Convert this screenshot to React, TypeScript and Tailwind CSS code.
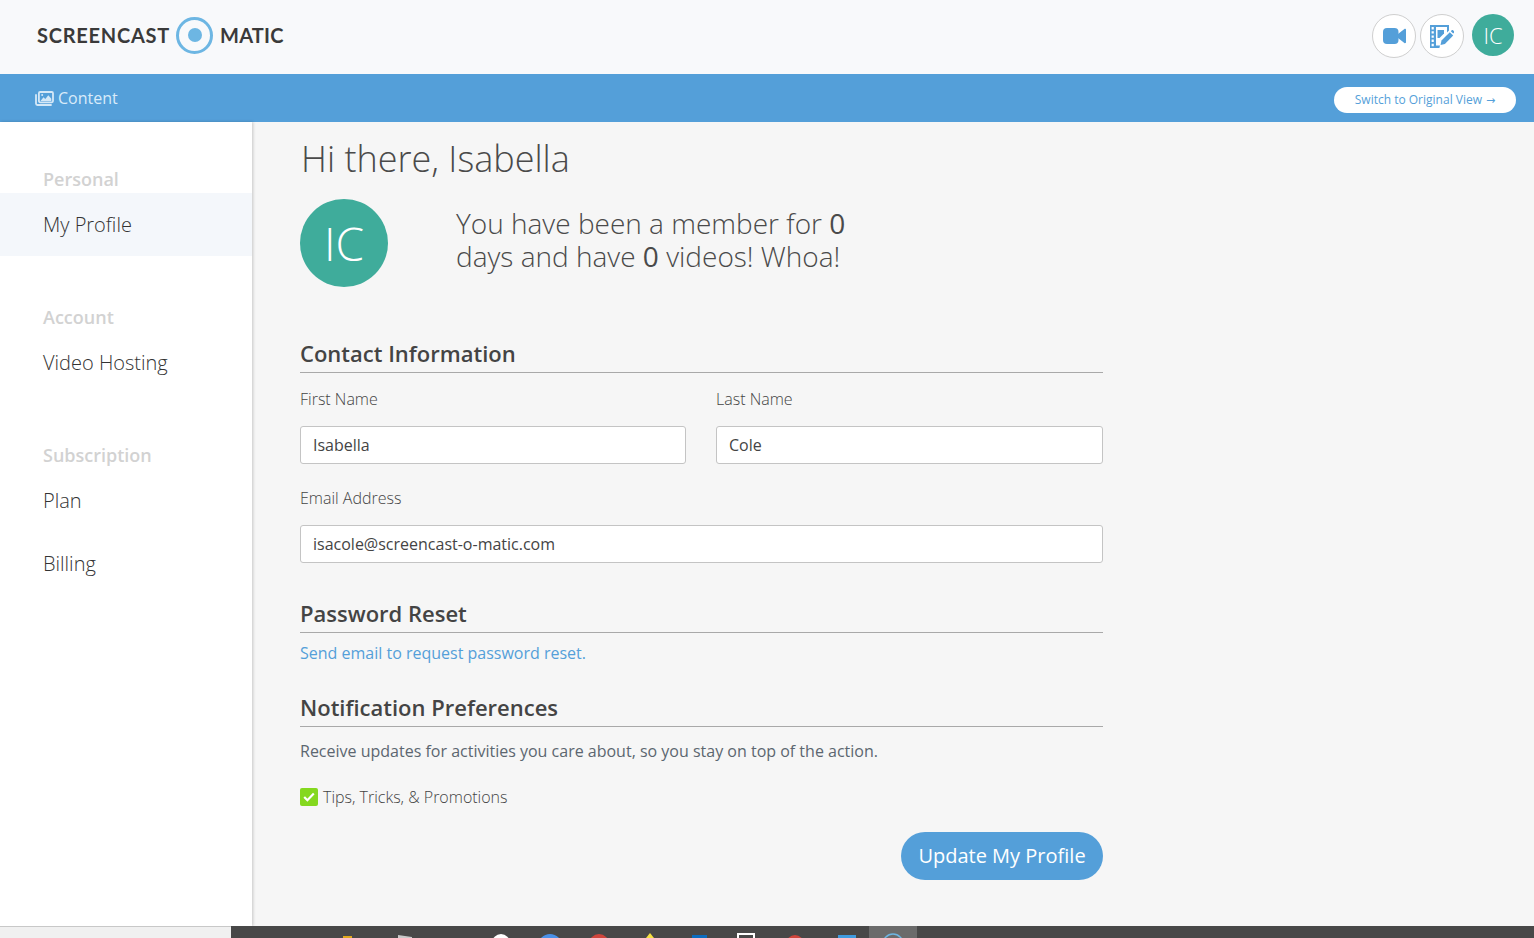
import React from 'react';

function ImagesIcon() {
  return (
    <svg width="19" height="15" viewBox="0 0 19 15" fill="none" className="text-[#d5e8f7]">
      <path d="M1 4v8.6c0 .8.6 1.4 1.4 1.4H16" stroke="currentColor" strokeWidth="1.8" strokeLinecap="round" />
      <rect x="3.9" y="1" width="14.1" height="10.3" rx="1.2" stroke="currentColor" strokeWidth="1.8" />
      <path d="M5.5 10l3-3.7 1.8 1.7 3-3.8 3 3.6v2.2z" fill="currentColor" />
      <circle cx="7.2" cy="4" r="1" fill="currentColor" />
    </svg>
  );
}

function VideoIcon() {
  return (
    <svg width="23" height="16" viewBox="0 0 23 16" fill="#549fd9">
      <rect x="0" y="0" width="15.5" height="16" rx="4" />
      <path d="M15 6l6.4-5c.6-.4 1.6-.1 1.6.7v12.6c0 .8-1 1.1-1.6.7L15 10z" />
    </svg>
  );
}

function FilmEditIcon() {
  return (
    <svg width="24" height="23" viewBox="0 0 24 23" fill="#549fd9">
      <path d="M0 0h19v5.5l-2 2V2H6v18.5h4l-.6 2.5H0zM1.6 2v2.4h2.2V2zm0 4.2v2.4h2.2V6.2zm0 4.2v2.4h2.2v-2.4zm0 4.2V17h2.2v-2.4zm0 4.2v2.4h2.2v-2.4z" fillRule="evenodd" />
      <path d="M7.5 5h6.5v3.5L9.5 13H7.5z" />
      <path d="M11.5 15.5L19.8 7.2l3.4 3.4-8.3 8.3-4.4 1z" />
      <path d="M20.8 6.2l.9-.9c.4-.4 1-.4 1.4 0l1 1c.4.4.4 1 0 1.4l-.9.9z" />
    </svg>
  );
}

function Section({ title }: { title: string }) {
  return (
    <h2 className="text-[22px] leading-[30px] font-semibold text-[#444] border-b border-[#a9a9a9] pb-1">{title}</h2>
  );
}

function Field({ label, value }: { label: string; value: string }) {
  return (
    <div>
      <label className="block text-[16px] leading-[22px] font-light text-[#444]">{label}</label>
      <input
        readOnly
        value={value}
        className="mt-4 block w-full h-[38px] px-3 bg-white border border-[#c4c4c4] rounded-[3px] text-[16px] text-[#444] outline-none"
      />
    </div>
  );
}

function NavGroup({ title, items }: { title: string; items: { label: string; active?: boolean }[] }) {
  return (
    <div className="mb-[49px]">
      <div className="pl-[43px] h-[26px] pb-[1px] flex items-center text-[18px] font-semibold text-[#d2d2d2]">{title}</div>
      {items.map(item => (
        <div
          key={item.label}
          className={`pl-[43px] h-[63px] flex items-center text-[20px] font-light text-[#333] ${item.active ? 'bg-[#f4f7fb]' : ''}`}
        >
          {item.label}
        </div>
      ))}
    </div>
  );
}

export default function App() {
  return (
    <div className="h-[938px] w-[1534px] overflow-hidden flex flex-col bg-[#f6f6f6] font-['Open_Sans',sans-serif]">
      <header className="h-[74px] shrink-0 bg-[#f8f9fb] flex items-center justify-between pl-[37px] pr-5 pb-[2px]">
        <div className="-mt-[2px] flex items-center text-[#3a3a3a] font-['Lato',sans-serif] font-bold text-[20px] tracking-[0.75px]">
          <span>SCREENCAST</span>
          <span className="ml-[6px] mr-[7px] w-[37px] h-[37px] rounded-full border-[3px] border-[#6db6e3] flex items-center justify-center">
            <span className="w-[14px] h-[14px] rounded-full bg-[#6db6e3]" />
          </span>
          <span className="tracking-[0.2px]">MATIC</span>
        </div>
        <div className="flex items-center gap-1">
          <button className="w-11 h-11 rounded-full border border-[#cfcfcf] bg-white flex items-center justify-center">
            <VideoIcon />
          </button>
          <button className="w-11 h-11 rounded-full border border-[#cfcfcf] bg-white flex items-center justify-center">
            <FilmEditIcon />
          </button>
          <div className="ml-1 -mt-[2px] w-[42px] h-[42px] rounded-full bg-[#3fac9b] text-white text-[22px] font-light flex items-center justify-center">IC</div>
        </div>
      </header>

      <div className="h-12 shrink-0 bg-[#549fd9] flex items-center justify-between pl-[35px] pr-[18px]">
        <div className="flex items-center gap-1 text-[16px] text-[#d9ebf9]">
          <ImagesIcon />
          <span>Content</span>
        </div>
        <button className="mt-1 h-[26px] w-[182px] rounded-full bg-white text-[12px] text-[#549fd9] flex items-center justify-center gap-1">
          <span>Switch to Original View</span>
          <span className="font-['DejaVu_Sans',sans-serif] text-[11px] leading-none">→</span>
        </button>
      </div>

      <div className="flex-1 min-h-0 flex">
        <aside className="w-[252px] shrink-0 bg-white shadow-[1px_0_3px_rgba(0,0,0,0.2)] pt-[45px]">
          <NavGroup title="Personal" items={[{ label: 'My Profile', active: true }]} />
          <NavGroup title="Account" items={[{ label: 'Video Hosting' }]} />
          <NavGroup title="Subscription" items={[{ label: 'Plan' }, { label: 'Billing' }]} />
        </aside>

        <main className="w-[803px] ml-[48px]">
          <h1 className="text-[36px] leading-[50px] font-light text-[#4a4a4a] mt-3 ml-[1px]">Hi there, Isabella</h1>
          <div className="flex items-center mt-[15px]">
            <div className="w-[88px] h-[88px] rounded-full bg-[#3fac9b] text-white text-[46px] font-light flex items-center justify-center">IC</div>
            <p className="ml-[68px] pb-[6px] text-[28px] leading-[33px] font-light text-[#4a4a4a]">
              You have been a member for <span className="font-normal">0</span>
              <br />
              days and have <span className="font-normal">0</span> videos! Whoa!
            </p>
          </div>

          <div className="mt-[51px]">
            <Section title="Contact Information" />
          </div>
          <div className="grid grid-cols-[386px_1fr] gap-[30px] mt-[15px]">
            <Field label="First Name" value="Isabella" />
            <Field label="Last Name" value="Cole" />
          </div>
          <div className="mt-[23px]">
            <Field label="Email Address" value="isacole@screencast-o-matic.com" />
          </div>

          <div className="mt-[35px]">
            <Section title="Password Reset" />
          </div>
          <a className="block mt-[9px] text-[16px] leading-[22px] text-[#549fd9]">Send email to request password reset.</a>

          <div className="mt-7">
            <Section title="Notification Preferences" />
          </div>
          <p className="mt-[13px] text-[16px] leading-[22px] text-[#5c6670]">
            Receive updates for activities you care about, so you stay on top of the action.
          </p>
          <div className="flex items-center mt-6 gap-[5px]">
            <span className="w-[18px] h-[18px] rounded-[2px] bg-[#84d81e] flex items-center justify-center">
              <svg width="12" height="10" viewBox="0 0 12 10" fill="none">
                <path d="M1.2 5l3.2 3.2L10.8 1.5" stroke="white" strokeWidth="2.2" />
              </svg>
            </span>
            <span className="text-[16px] leading-[22px] font-light text-[#444]">Tips, Tricks, &amp; Promotions</span>
          </div>
          <div className="flex justify-end mt-6">
            <button className="h-12 w-[202px] rounded-full bg-[#549fd9] text-white text-[20px] flex items-center justify-center">
              Update My Profile
            </button>
          </div>
        </main>
      </div>

      <footer className="h-3 shrink-0 flex">
        <div className="w-[231px] bg-[#f0f0f0] border-t border-[#c8c8c8]" />
        <div className="flex-1 bg-[#484848] relative overflow-hidden flex">
          <div className="ml-[638px] w-12 bg-[#6b6b6b]" />
          <svg className="absolute left-0 top-0" width="700" height="12" viewBox="0 0 700 12">
            <rect x="112" y="10" width="9" height="2" fill="#e0a81c" />
            <path d="M167 9l14 2v1h-14z" fill="#c9c9c9" />
            <circle cx="270" cy="17" r="9" fill="#fff" />
            <circle cx="319" cy="20" r="12" fill="#4a90e8" />
            <circle cx="368" cy="18" r="10" fill="#d0453c" />
            <path d="M419 7l4 5h-8z" fill="#f5e042" />
            <rect x="461" y="9" width="15" height="3" fill="#0b6cc0" />
            <rect x="507" y="8" width="16" height="8" fill="#484848" stroke="#fff" strokeWidth="2" />
            <circle cx="564" cy="18" r="9" fill="#d0453c" />
            <rect x="607" y="9" width="18" height="3" fill="#3f9be0" />
            <circle cx="662" cy="18" r="10" fill="none" stroke="#6db6e3" strokeWidth="1.5" />
          </svg>
        </div>
      </footer>
    </div>
  );
}
